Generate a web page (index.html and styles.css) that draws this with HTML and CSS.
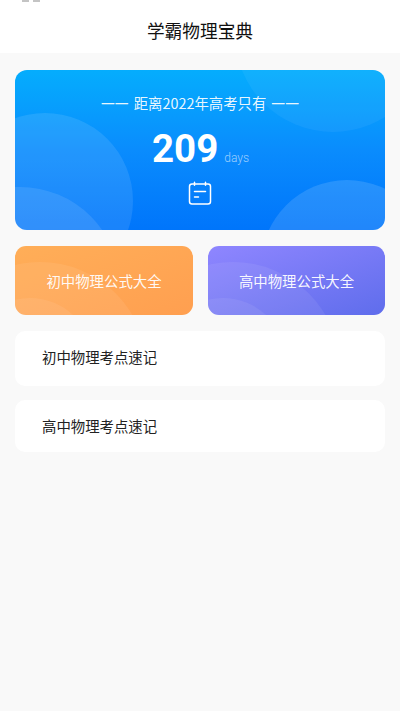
FILE: index.html
```html
<!DOCTYPE html>
<html lang="zh-CN">
<head>
<meta charset="utf-8">
<title>学霸物理宝典</title>
<link rel="stylesheet" href="styles.css">
</head>
<body>
<header class="topbar">
  <div class="status-remnant"><i></i><i></i></div>
  <h1 class="title">学霸物理宝典</h1>
</header>
<main class="content">
  <section class="hero">
    <span class="blob hero-a"></span>
    <span class="blob hero-b"></span>
    <span class="blob hero-c"></span>
    <span class="blob hero-d"></span>
    <p class="hero-line"><span class="dash">一一</span><span>距离2022年高考只有</span><span class="dash">一一</span></p>
    <div class="count"><strong class="count-num">209</strong><span class="count-unit">days</span></div>
    <svg class="calendar" width="24" height="24" viewBox="0 0 24 24" fill="none" stroke="#fff" stroke-width="1.5" stroke-linecap="round" stroke-linejoin="round" aria-hidden="true">
      <rect x="1.5" y="3" width="21" height="20" rx="2.5"/>
      <path d="M6.5 1.2v3M17.5 1.2v3M6.5 10.5h11M6.5 16h4"/>
    </svg>
  </section>
  <section class="shortcuts">
    <a class="shortcut orange"><span class="blob sc-a"></span><span class="blob sc-b"></span><span class="label">初中物理公式大全</span></a>
    <a class="shortcut violet"><span class="blob sc-a"></span><span class="blob sc-b"></span><span class="label">高中物理公式大全</span></a>
  </section>
  <a class="row row-first">初中物理考点速记</a>
  <a class="row row-second">高中物理考点速记</a>
</main>
</body>
</html>
```
FILE: styles.css
```css
* { box-sizing: border-box; }
html, body { margin: 0; height: 100%; }
body {
  background: #f9f9f9;
  font-family: "Noto Sans CJK SC", "Noto Sans", Roboto, sans-serif;
  overflow: hidden;
}
.topbar {
  position: relative;
  height: 53px;
  background: #fff;
  display: flex;
  align-items: center;
  justify-content: center;
  padding-top: 6px;
}
.status-remnant {
  position: absolute;
  top: 0;
  left: 22px;
  display: flex;
  gap: 4px;
}
.status-remnant i { display: block; width: 7px; height: 2px; background: #c4c4c4; }
.title {
  margin: 0;
  font-size: 17.7px;
  font-weight: 400;
  color: #111;
  line-height: 24px;
}
.content { padding: 17px 15px 0; }
.hero {
  position: relative;
  overflow: hidden;
  height: 160px;
  border-radius: 12px;
  background: linear-gradient(180deg, #05adfd 0%, #0a8cfd 50%, #0075fb 100%);
  display: flex;
  flex-direction: column;
  align-items: center;
  color: #fff;
}
.blob { position: absolute; border-radius: 50%; background: rgba(255, 255, 255, 0.1); }
.hero-a { width: 176px; height: 176px; left: -58px; top: 43px; }
.hero-b { width: 200px; height: 200px; left: -95px; top: 117px; }
.hero-c { width: 196px; height: 196px; left: 220px; top: -134px; background: rgba(255, 255, 255, 0.05); }
.hero-d { width: 172px; height: 172px; left: 246px; top: 110px; background: rgba(255, 255, 255, 0.13); }
.hero-line {
  position: relative;
  display: flex;
  gap: 5px;
  margin: 23px 0 0;
  font-size: 14.4px;
  line-height: 20px;
  white-space: nowrap;
  color: rgba(255, 255, 255, 0.92);
}
.dash { font-size: 13.8px; }
.count {
  position: relative;
  display: flex;
  align-items: baseline;
  margin: 13px 0 0 1px;
  height: 46px;
}
.count-num {
  font-family: Roboto, sans-serif;
  font-size: 38.5px;
  font-weight: 700;
  line-height: 46px;
}
.count-unit {
  font-family: Roboto, sans-serif;
  font-size: 12px;
  font-weight: 300;
  margin-left: 6px;
  color: rgba(255, 255, 255, 0.6);
}
.calendar { position: relative; margin-top: 9px; }
.shortcuts {
  display: grid;
  grid-template-columns: 178px 177px;
  gap: 15px;
  margin-top: 16px;
}
.shortcut {
  position: relative;
  overflow: hidden;
  height: 69px;
  border-radius: 11px;
  display: flex;
  align-items: center;
  justify-content: center;
  color: #fff;
}
.orange { background: linear-gradient(160deg, #ffae58 0%, #ff9f50 100%); }
.orange .blob { background: rgba(255, 255, 255, 0.07); }
.violet { background: linear-gradient(160deg, #8f86ff 0%, #5f6dec 100%); }
.violet .blob { background: rgba(255, 255, 255, 0.07); }
.sc-a { width: 214px; height: 214px; left: -82px; top: 16px; }
.sc-b { width: 126px; height: 126px; left: -48px; top: 52px; }
.label { position: relative; font-size: 14.4px; line-height: 20px; color: rgba(255, 255, 255, 0.95); }
.row {
  display: flex;
  align-items: center;
  padding: 0 27px;
  border-radius: 10px;
  background: #fff;
  color: #222;
  font-size: 14.4px;
  line-height: 20px;
}
.row-first { height: 55px; margin-top: 16px; padding-bottom: 4px; }
.row-second { height: 52px; margin-top: 14px; }
```
